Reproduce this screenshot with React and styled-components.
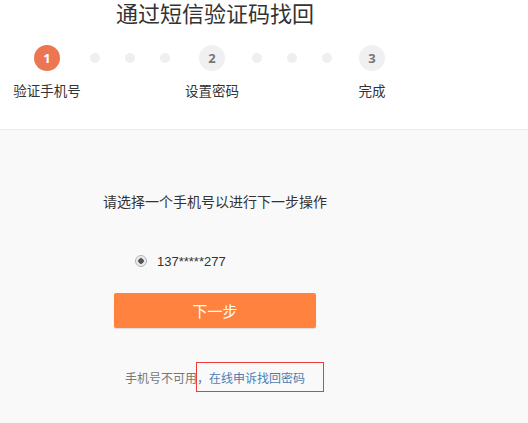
import React from 'react'
import styled, { createGlobalStyle } from 'styled-components'

const Global = createGlobalStyle`
  html, body { margin: 0; padding: 0; }
  body {
    background: #f9f9f9;
    font-family: "Liberation Sans", "Noto Sans CJK SC", sans-serif;
    color: #333;
    width: 528px;
    height: 423px;
    overflow: hidden;
  }
`

const Header = styled.header`
  background: #fff;
  border-bottom: 1px solid #ececec;
  padding-bottom: 29px;
`

const Inner = styled.div`
  width: 430px;
`

const Title = styled.h1`
  margin: 0;
  font-family: "Noto Sans CJK SC", sans-serif;
  font-weight: 400;
  font-size: 22px;
  line-height: 24px;
  text-align: center;
  color: #333;
`

const Steps = styled.div`
  display: flex;
  align-items: flex-start;
  padding-left: 7px;
  margin-top: 21px;
`

const Step = styled.div`
  width: 80px;
  display: flex;
  flex-direction: column;
  align-items: center;
`

const Circle = styled.div`
  width: 26px;
  height: 26px;
  border-radius: 50%;
  background: ${p => (p.$active ? '#ec7552' : '#f0f0f2')};
  color: ${p => (p.$active ? '#fff' : '#777')};
  font-family: "Open Sans", "Liberation Sans", sans-serif;
  font-weight: 700;
  font-size: 13px;
  display: flex;
  align-items: center;
  justify-content: center;
`

const Label = styled.div`
  margin-top: 9px;
  font-family: "Noto Sans CJK SC", sans-serif;
  font-size: 13.5px;
  line-height: 20px;
  color: #333;
  white-space: nowrap;
`

const Dots = styled.div`
  width: ${p => p.$w}px;
  height: 26px;
  display: flex;
  align-items: center;
  justify-content: center;
  gap: 25px;
`

const Dot = styled.span`
  width: 10px;
  height: 10px;
  border-radius: 50%;
  background: #efeff1;
`

const Main = styled.main`
  padding-top: 61px;
`

const Prompt = styled.p`
  margin: 0;
  font-family: "Noto Sans CJK SC", sans-serif;
  font-size: 14px;
  line-height: 20px;
  text-align: center;
  color: #333;
`

const Column = styled.div`
  width: 202px;
  margin-left: 114px;
`

const RadioRow = styled.label`
  display: flex;
  align-items: center;
  gap: 10px;
  padding-left: 135px;
  margin-top: 40px;
  font-size: 13px;
  color: #333;
  height: 20px;
`

const Radio = styled.span`
  width: 12px;
  height: 12px;
  border-radius: 50%;
  border: 1px solid #b4b4b4;
  background: radial-gradient(circle, #555 0 2.5px, #e6e6e6 3px, #f4f4f4 100%);
  box-sizing: border-box;
`

const Button = styled.button`
  display: block;
  width: 202px;
  height: 35px;
  margin-top: 22px;
  border: none;
  border-radius: 2px;
  background: #ff823f;
  color: #fff;
  font-family: "Noto Sans CJK SC", sans-serif;
  font-size: 15px;
  box-shadow: 0 1px 1px rgba(0, 0, 0, 0.12);
`

const Help = styled.div`
  margin-top: 34px;
  padding-left: 11px;
  display: flex;
  align-items: center;
  width: max-content;
  white-space: nowrap;
  font-family: "Noto Sans CJK SC", sans-serif;
  font-size: 12px;
  color: #777;
`

const Link = styled.a`
  display: flex;
  align-items: center;
  width: 128px;
  height: 30px;
  margin-left: -1px;
  box-sizing: border-box;
  border: 1px solid #f03a3a;
  color: #4d7db3;
  text-decoration: none;
`

export default function App() {
  return (
    <>
      <Global />
      <Header>
        <Inner>
          <Title>通过短信验证码找回</Title>
          <Steps>
            <Step>
              <Circle $active>1</Circle>
              <Label>验证手机号</Label>
            </Step>
            <Dots $w={85}><Dot /><Dot /><Dot /></Dots>
            <Step>
              <Circle>2</Circle>
              <Label>设置密码</Label>
            </Step>
            <Dots $w={80}><Dot /><Dot /><Dot /></Dots>
            <Step>
              <Circle>3</Circle>
              <Label>完成</Label>
            </Step>
          </Steps>
        </Inner>
      </Header>
      <Main>
        <Inner>
          <Prompt>请选择一个手机号以进行下一步操作</Prompt>
        </Inner>
        <RadioRow>
          <Radio />
          <span>137*****277</span>
        </RadioRow>
        <Column>
          <Button>下一步</Button>
          <Help>
            <span>手机号不可用</span>
            <Link href="#">，在线申诉找回密码</Link>
          </Help>
        </Column>
      </Main>
    </>
  )
}
